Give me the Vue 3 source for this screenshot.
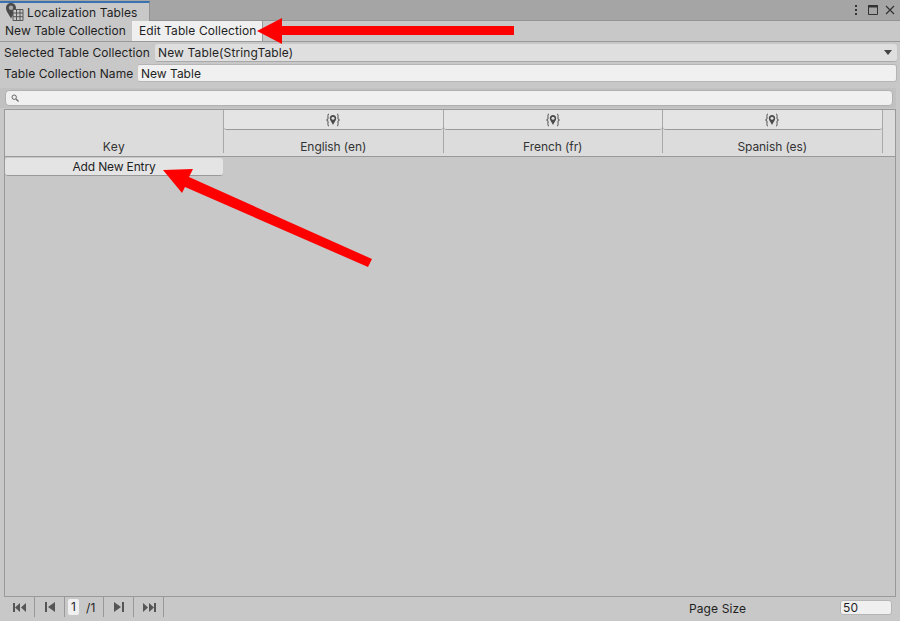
<script setup>
const locales = ['English (en)', 'French (fr)', 'Spanish (es)']
</script>

<template>
  <div class="window">
    <div class="titlebar">
      <div class="tab">
        <svg class="tabIcon" viewBox="0 0 20 20" width="20" height="20">
          <path d="M7 1C4 1 2 3.200 2 6c0 3.500 3 6.500 5 10.500C9 12.500 12 9.500 12 6c0-2.800-2-5-5-5z" fill="#4a4a4a" />
          <circle cx="7" cy="5.800" r="2.200" fill="#a8a8a8" />
          <path d="M9 7.500h10v11H9z" fill="#c8c8c8" stroke="#555" />
          <path d="M12.500 7.500v11M16 7.500v11M9 11h10M9 14.700h10" stroke="#555" fill="none" />
        </svg>
        <span>Localization Tables</span>
      </div>
      <div class="windowControls">
        <svg class="menuDots" viewBox="0 0 4 12" width="4" height="12"><path d="M1 1h2v2H1zM1 5h2v2H1zM1 9h2v2H1z" fill="#333" /></svg>
        <svg viewBox="0 0 10 10" width="10" height="10"><path d="M.5.500h9v9h-9z" fill="none" stroke="#333" /><path d="M0 0h10v2.500H0z" fill="#333" /></svg>
        <svg viewBox="0 0 10 10" width="10" height="10"><path d="M1 1l8 8M9 1l-8 8" stroke="#333" stroke-width="1.200" fill="none" /></svg>
      </div>
    </div>

    <div class="modeBar">
      <div class="modeTab">New Table Collection</div>
      <div class="modeTab active">Edit Table Collection</div>
    </div>

    <div class="formRow selectRow">
      <label>Selected Table Collection</label>
      <div class="select">
        <span>New Table(StringTable)</span>
        <i class="caret"></i>
      </div>
    </div>
    <div class="formRow nameRow">
      <label>Table Collection Name</label>
      <div class="input">New Table</div>
    </div>

    <div class="searchBar">
      <div class="search">
        <svg viewBox="0 0 8 8" width="8" height="8"><circle cx="3.200" cy="3.200" r="2.200" fill="none" stroke="#666" /><path d="M5 5l2.500 2.500" stroke="#666" stroke-width="1.200" /></svg>
      </div>
    </div>

    <div class="table">
      <div class="tableHead">
        <div class="keyCol">Key</div>
        <div v-for="locale in locales" :key="locale" class="localeCol">
          <div class="localeBtn">
            <svg viewBox="0 0 16 14" width="16" height="14">
              <path d="M4 1C2.500 1 3 3 3 5c0 1.500-.5 2-1.500 2C2.500 7 3 7.500 3 9c0 2-.5 4 1 4M12 1c1.500 0 1 2 1 4 0 1.500.5 2 1.500 2-1 0-1.500.5-1.500 2 0 2 .5 4-1 4" fill="none" stroke="#4a4a4a" />
              <path d="M8 2C6 2 4.800 3.500 4.800 5.300 4.800 7.500 7 9.500 8 12c1-2.500 3.200-4.500 3.200-6.700C11.200 3.500 10 2 8 2z" fill="#4a4a4a" />
              <circle cx="8" cy="5.300" r="1.500" fill="#e2e2e2" />
            </svg>
          </div>
          <div class="localeName">{{ locale }}</div>
        </div>
      </div>
      <div class="tableBody">
        <div class="addBtn">Add New Entry</div>
      </div>
    </div>

    <div class="pager">
      <div class="pageBtn">
        <svg viewBox="0 0 14 9" width="14" height="9"><path d="M0 0h2v9H0zM7 0v9L2 4.500zM13 0v9L8 4.500z" fill="#555" /></svg>
      </div>
      <div class="pageBtn">
        <svg viewBox="0 0 10 10" width="10" height="10"><path d="M0 0h2v10H0zM10 0v10L3 5z" fill="#555" /></svg>
      </div>
      <div class="pageNum">
        <span class="pageInput">1</span>
        <span>/1</span>
      </div>
      <div class="pageBtn">
        <svg viewBox="0 0 10 10" width="10" height="10"><path d="M8 0h2v10H8zM0 0v10l7-5z" fill="#555" /></svg>
      </div>
      <div class="pageBtn">
        <svg viewBox="0 0 14 9" width="14" height="9"><path d="M12 0h2v9h-2zM1 0v9l5-4.500zM7 0v9l5-4.500z" fill="#555" /></svg>
      </div>
      <span class="pageSizeLabel">Page Size</span>
      <div class="pageSizeInput">50</div>
    </div>

    <svg class="arrows" viewBox="0 0 900 621" width="900" height="621">
      <path d="M514 26H282V18L257 31 282 44V35H514z" fill="#ff0000" />
      <path d="M372 259L189 177 193 169 163 170 182 193 185 187 368 267z" fill="#ff0000" />
    </svg>
  </div>
</template>

<style scoped>
.window {
  position: relative;
  width: 900px;
  height: 621px;
  display: flex;
  flex-direction: column;
  overflow: hidden;
  background: #c8c8c8;
  color: #1f1f1f;
  font-family: Inter, "Liberation Sans", sans-serif;
  font-size: 12px;
  letter-spacing: 0.08px;
  box-sizing: border-box;
}
.titlebar {
  height: 21px;
  flex: none;
  display: flex;
  justify-content: space-between;
  background: #a5a5a5;
  border-bottom: 1px solid #939393;
  box-sizing: border-box;
}
.tab {
  width: 150px;
  height: 21px;
  margin-top: 1px;
  display: flex;
  align-items: center;
  gap: 3px;
  padding-left: 4px;
  background: #c8c8c8;
  border-top: 2px solid #3a72b0;
  border-right: 1px solid #939393;
  box-sizing: border-box;
  white-space: nowrap;
  letter-spacing: 0.1px;
}
.tabIcon {
  margin-top: -2px;
}
.windowControls {
  display: flex;
  align-items: center;
  gap: 7px;
  padding-right: 5px;
  padding-bottom: 1px;
}
.menuDots {
  margin-right: 3px;
}
.modeBar {
  height: 21px;
  flex: none;
  display: flex;
  border-bottom: 1px solid #999;
  box-sizing: border-box;
}
.modeTab {
  width: 132px;
  padding-left: 5px;
  line-height: 20px;
  white-space: nowrap;
  box-sizing: border-box;
  letter-spacing: 0.04px;
}
.modeTab.active {
  width: 131px;
  padding-left: 7px;
  background: #efefef;
  border-right: 1px solid #999;
  letter-spacing: 0.08px;
}
.formRow {
  flex: none;
  display: flex;
  align-items: center;
  padding: 0 3px 0 4px;
  white-space: nowrap;
}
.selectRow {
  height: 21px;
}
.selectRow label {
  width: 151px;
  flex: none;
}
.nameRow {
  height: 20px;
}
.nameRow label {
  width: 133px;
  flex: none;
}
.select {
  flex: 1;
  height: 18px;
  display: flex;
  align-items: center;
  justify-content: space-between;
  padding: 0 4px 0 3px;
  background: #dfdfdf;
  border-radius: 3px;
  border-bottom: 1px solid #a8a8a8;
  box-sizing: border-box;
  letter-spacing: 0.13px;
}
.caret {
  width: 0;
  height: 0;
  margin-right: 1px;
  border-left: 4px solid transparent;
  border-right: 4px solid transparent;
  border-top: 5px solid #444;
}
.input {
  flex: 1;
  height: 18px;
  line-height: 17px;
  padding-left: 3px;
  background: #f0f0f0;
  border: 1px solid #b5b5b5;
  border-left-color: #c8c8c8;
  border-radius: 3px;
  box-sizing: border-box;
  letter-spacing: 0;
}
.searchBar {
  flex: none;
  height: 20px;
  margin-top: 5px;
  padding: 2px 3px 2px 5px;
  background: #c1c1c1;
  box-sizing: border-box;
  width: 896px;
}
.search {
  height: 16px;
  width: 888px;
  display: flex;
  align-items: center;
  padding-left: 5px;
  background: #f0f0f0;
  border: 1px solid #b0b0b0;
  border-radius: 4px;
  box-sizing: border-box;
}
.table {
  flex: none;
  height: 488px;
  width: 892px;
  margin-left: 4px;
  margin-top: 1px;
  display: flex;
  flex-direction: column;
  border: 1px solid #999;
  box-sizing: border-box;
}
.tableHead {
  height: 47px;
  flex: none;
  display: flex;
  background: #dcdcdc;
  border-bottom: 1px solid #999;
  box-sizing: border-box;
}
.keyCol {
  width: 219px;
  flex: none;
  height: 43px;
  padding-top: 29px;
  line-height: 15px;
  text-align: center;
  box-sizing: border-box;
  color: #333;
  letter-spacing: 0.5px;
  border-right: 1px solid #a8a8a8;
}
.localeCol {
  width: 219.500px;
  flex: none;
  height: 43px;
  border-right: 1px solid #a8a8a8;
  box-sizing: border-box;
}
.localeBtn {
  height: 20px;
  display: flex;
  align-items: center;
  justify-content: center;
  background: #e4e4e4;
  border-bottom: 1px solid #999;
  border-radius: 0 0 3px 3px;
  box-sizing: border-box;
}
.localeName {
  text-align: center;
  line-height: 15px;
  margin-top: 9px;
  color: #333;
  letter-spacing: -0.08px;
}
.tableBody {
  flex: 1;
  background: #c8c8c8;
}
.addBtn {
  width: 218px;
  height: 18px;
  line-height: 17px;
  text-align: center;
  background: #e4e4e4;
  border-bottom: 1px solid #999;
  border-radius: 3px;
  box-sizing: border-box;
  margin-top: 1px;
  letter-spacing: -0.15px;
}
.pager {
  flex: 1;
  display: flex;
  align-items: flex-start;
  padding-left: 5px;
}
.pageBtn {
  width: 30px;
  height: 20px;
  display: flex;
  align-items: center;
  justify-content: center;
  border-right: 1px solid #999;
  box-sizing: border-box;
}
.pageNum {
  width: 39px;
  height: 20px;
  display: flex;
  align-items: center;
  gap: 7px;
  padding-left: 3px;
  border-right: 1px solid #999;
  box-sizing: border-box;
}
.pageInput {
  width: 11px;
  height: 16px;
  line-height: 16px;
  text-align: center;
  background: #f0f0f0;
  border-radius: 2px;
}
.pageSizeLabel {
  margin-left: 525px;
  margin-top: 4px;
  line-height: 15px;
  letter-spacing: 0.1px;
}
.pageSizeInput {
  width: 52px;
  height: 15px;
  line-height: 14px;
  margin-left: 94px;
  margin-top: 3px;
  padding-left: 2px;
  background: #f0f0f0;
  border: 1px solid #b5b5b5;
  border-radius: 3px;
  box-sizing: border-box;
}
.arrows {
  position: absolute;
  left: 0;
  top: 0;
  pointer-events: none;
}
</style>
